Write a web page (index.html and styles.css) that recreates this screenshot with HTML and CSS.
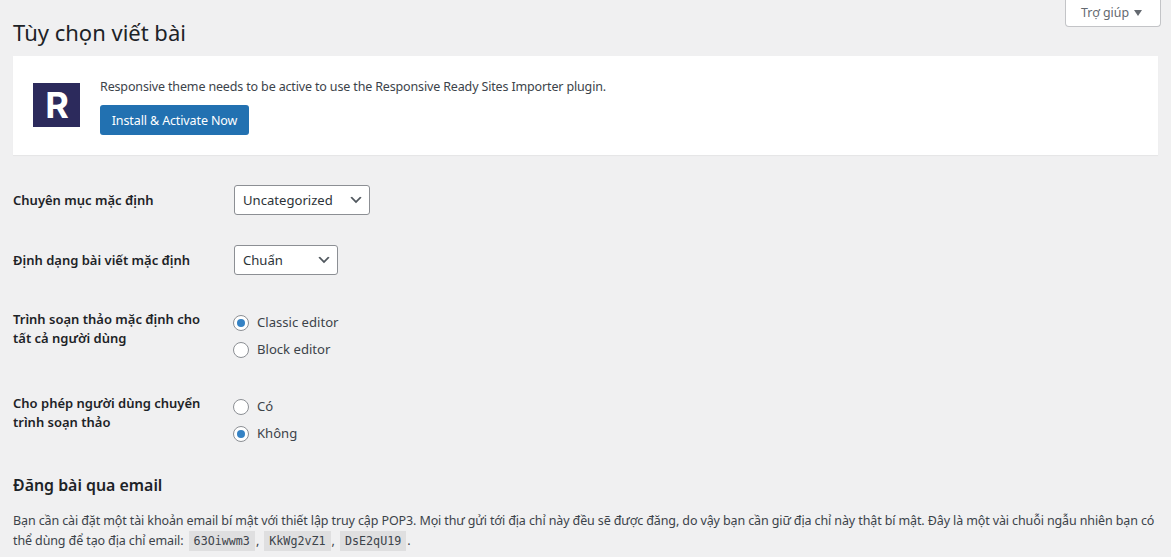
FILE: index.html
```html
<!DOCTYPE html>
<html lang="vi">
<head>
<meta charset="utf-8">
<title>Tùy chọn viết bài</title>
<link rel="stylesheet" href="styles.css">
</head>
<body>
<div class="screen-meta">
  <button class="help-tab" type="button">Trợ giúp <span class="help-arrow"></span></button>
</div>
<main class="wrap">
  <h1 class="page-title">Tùy chọn viết bài</h1>
  <section class="notice">
    <div class="notice-logo"><span>R</span></div>
    <div class="notice-body">
      <p class="notice-text">Responsive theme needs to be active to use the Responsive Ready Sites Importer plugin.</p>
      <a class="button-primary" href="#">Install &amp; Activate Now</a>
    </div>
  </section>
  <form>
    <table class="form-table">
      <tbody>
        <tr>
          <th>Chuyên mục mặc định</th>
          <td>
            <div class="select select-category"><span>Uncategorized</span><svg viewBox="0 0 20 20" width="16" height="16"><path d="M5 6l5 5 5-5 2 1-7 7-7-7z" fill="#50575e"/></svg></div>
          </td>
        </tr>
        <tr>
          <th>Định dạng bài viết mặc định</th>
          <td>
            <div class="select select-format"><span>Chuẩn</span><svg viewBox="0 0 20 20" width="16" height="16"><path d="M5 6l5 5 5-5 2 1-7 7-7-7z" fill="#50575e"/></svg></div>
          </td>
        </tr>
        <tr>
          <th>Trình soạn thảo mặc định cho tất cả người dùng</th>
          <td class="radio-cell">
            <label class="radio-row"><input type="radio" name="editor" checked>Classic editor</label>
            <label class="radio-row"><input type="radio" name="editor">Block editor</label>
          </td>
        </tr>
        <tr>
          <th>Cho phép người dùng chuyển trình soạn thảo</th>
          <td class="radio-cell">
            <label class="radio-row"><input type="radio" name="switch">Có</label>
            <label class="radio-row"><input type="radio" name="switch" checked>Không</label>
          </td>
        </tr>
      </tbody>
    </table>
    <h2 class="section-title">Đăng bài qua email</h2>
    <p class="section-text">Bạn cần cài đặt một tài khoản email bí mật với thiết lập truy cập POP3. Mọi thư gửi tới địa chỉ này đều sẽ được đăng, do vậy bạn cần giữ địa chỉ này thật bí mật. Đây là một vài chuỗi ngẫu nhiên bạn có thể dùng để tạo địa chỉ email: <code>63Oiwwm3</code>, <code>KkWg2vZ1</code>, <code>DsE2qU19</code>.</p>
  </form>
</main>
</body>
</html>
```
FILE: styles.css
```css
* { box-sizing: border-box; }
html, body { margin: 0; height: 557px; overflow: hidden; }
body {
  background: #f0f0f1;
  color: #3c434a;
  font-family: "Noto Sans", "Open Sans", sans-serif;
  font-size: 13px;
  line-height: 1.4;
}
.screen-meta { display: flex; justify-content: flex-end; height: 0; padding-right: 10px; }
.help-tab {
  display: flex; align-items: center; gap: 5px;
  width: 96px; height: 28px; margin-top: -1px; padding: 0 0 0 15px;
  background: #fff; border: 1px solid #c3c4c7; border-top: 0;
  border-radius: 0 0 4px 4px;
  color: #646970; font: inherit; font-size: 12.4px;
}
.help-arrow { width: 0; height: 0; border: 4.5px solid transparent; border-top: 6px solid #646970; border-bottom: 0; }
.wrap { padding: 0 13px; }
.page-title { margin: 0; padding: 17px 0 9px; height: 56px; font-size: 22px; font-weight: 400; line-height: 30px; color: #1d2327; }
.notice {
  display: flex; align-items: flex-start; gap: 20px;
  height: 99px; padding: 27px 20px 0;
  background: #fff; box-shadow: 0 1px 1px rgba(0,0,0,.04);
}
.notice-logo {
  display: flex; align-items: center; justify-content: center;
  width: 47px; height: 44px; padding-left: 1px;
  background: #2c2a5c; color: #fff;
  font-family: Inter, sans-serif; font-size: 36px; font-weight: 700; line-height: 1;
}
.notice-body { margin-top: -7px; }
.notice-text { margin: 1px 0 6px; color: #3c434a; line-height: 20px; height: 22px; font-size: 12.5px; letter-spacing: -.15px; }
.button-primary {
  display: inline-flex; align-items: center; justify-content: center;
  width: 149px; height: 30px; padding-top: 1px; background: #2271b1; border-radius: 3px;
  color: #fff; text-decoration: none; font-size: 12.5px; letter-spacing: -.12px;
}
.form-table { margin-top: 15px; border-collapse: collapse; border-spacing: 0; width: 100%; }
.form-table th {
  width: 220px; padding: 20px 20px 20px 0;
  text-align: left; vertical-align: top; font-weight: 600; font-size: 13px;
  line-height: 19px; color: #1d2327;
}
.form-table tr:nth-child(-n+2) th { padding-top: 21px; }
.form-table td { padding: 15px 0; vertical-align: top; }
.select {
  display: inline-flex; align-items: center; justify-content: space-between;
  height: 30px; margin-left: 1px; padding: 0 5px 0 8px; background: #fff;
  border: 1px solid #8c8f94; border-radius: 3px; color: #2c3338; font-size: 13.1px;
}
.select-category { width: 136px; }
.select-format { width: 104px; }
.radio-cell { display: flex; flex-direction: column; gap: 8px; padding-top: 23px !important; }
.radio-row { display: flex; align-items: center; height: 19px; gap: 8px; font-size: 13.1px; color: #3c434a; }
.radio-row input {
  appearance: none; margin: 0; width: 16px; height: 16px; flex: none;
  background: #fff; border: 1px solid #8c8f94; border-radius: 50%;
  display: grid; place-items: center;
}
.radio-row input:checked::before { content: ""; width: 8px; height: 8px; border-radius: 50%; background: #3582c4; }
.section-title { margin: 15px 0 0; font-size: 15.9px; line-height: 24px; font-weight: 600; color: #1d2327; }
.section-text { margin: 14px 0 0; font-size: 12.5px; letter-spacing: -.115px; line-height: 20px; color: #3c434a; }
code {
  display: inline-block; height: 20px; padding: 0 5px; margin: 0 1px 0 2px; background: rgba(0,0,0,.07);
  font-family: "DejaVu Sans Mono", monospace; font-size: 11.7px; line-height: 20px; letter-spacing: 0; color: #3c434a;
}
```
